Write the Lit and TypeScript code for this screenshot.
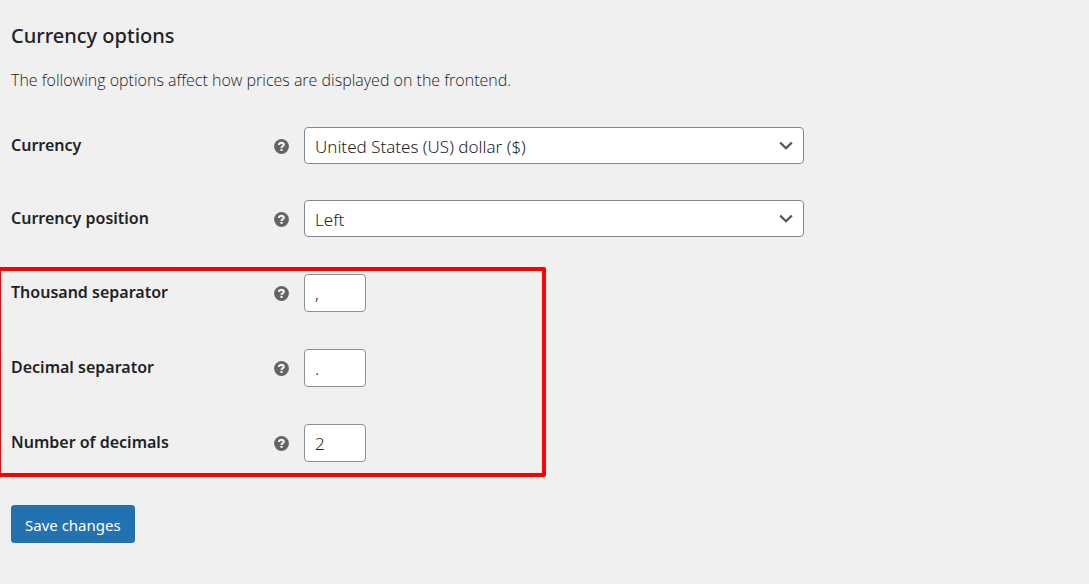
import { LitElement, html, css, svg } from "lit";
import { customElement, property } from "lit/decorators.js";

@customElement("help-tip")
class HelpTip extends LitElement {
  static styles = css`
    :host {
      display: block;
      width: 15px;
      height: 15px;
    }
    .icon {
      display: block;
      width: 15px;
      height: 15px;
    }
  `;

  render() {
    return html`<svg class="icon" viewBox="0 0 15 15" role="img" aria-label="Help">
      ${svg`<circle cx="7.5" cy="7.5" r="7.4" fill="#646464"></circle>
      <path d="M4.9 5.9C4.9 4.4 6 3.9 7.4 3.9S9.8 4.6 9.8 5.7C9.8 7.2 7.5 7.2 7.5 9" fill="none" stroke="#f0f0f0" stroke-width="2.1"></path>
      <rect x="6.4" y="9.9" width="2.2" height="2" fill="#f0f0f0"></rect>`}
    </svg>`;
  }
}

@customElement("setting-row")
class SettingRow extends LitElement {
  @property() label = "";
  @property() name = "";
  @property() value = "";
  @property({ type: Array }) options: string[] = [];
  @property() type = "text";

  static styles = css`
    :host {
      display: block;
    }
    .row {
      display: grid;
      grid-template-columns: 263px 15px minmax(0, 515px);
      align-items: center;
    }
    .label {
      font-size: 16px;
      line-height: 22px;
      font-weight: 600;
      color: #1d2327;
      padding-bottom: 2px;
    }
    .tip {
      padding-top: 1px;
    }
    .field {
      position: relative;
      margin-left: 15px;
    }
    .select,
    .input {
      display: block;
      box-sizing: border-box;
      appearance: none;
      margin: 0;
      border-radius: 4px;
      background: #fff;
      color: #1d2327;
      font: inherit;
      font-size: 17px;
      font-weight: 300;
      line-height: 22px;
    }
    .select {
      width: 100%;
      height: 37px;
      padding: 2px 32px 0 10px;
      border: 1px solid #7e8993;
    }
    .input {
      width: 62px;
      height: 38px;
      padding: 1px 10px 0;
      border: 1px solid #8c8f94;
      appearance: textfield;
    }
    .input::-webkit-inner-spin-button {
      appearance: none;
    }
    .chevron {
      position: absolute;
      right: 10px;
      top: 14px;
      width: 15px;
      height: 10px;
      pointer-events: none;
    }
  `;

  render() {
    return html`<div class="row">
      <label class="label" for=${this.name}>${this.label}</label>
      <help-tip class="tip"></help-tip>
      <div class="field">
        ${this.options.length
          ? html`<select class="select" id=${this.name}>
                ${this.options.map((o) => html`<option>${o}</option>`)}
              </select>
              <svg class="chevron" viewBox="0 0 15 10" aria-hidden="true">
                <path d="M1.2 1.6 7 7.3 12.8 1.6" fill="none" stroke="#50575e" stroke-width="2.2"></path>
              </svg>`
          : html`<input class="input" id=${this.name} type=${this.type} .value=${this.value} />`}
      </div>
    </div>`;
  }
}

@customElement("app-root")
class AppRoot extends LitElement {
  static styles = css`
    :host {
      display: block;
      box-sizing: border-box;
      min-height: 100vh;
      padding: 22px 11px;
      background: #f0f0f0;
      font-family: "Segoe UI", "Noto Sans", "Open Sans", sans-serif;
      color: #1d2327;
    }
    .title {
      margin: 0;
      font-size: 20px;
      line-height: 28px;
      font-weight: 500;
    }
    .intro {
      margin: 19px 0 36px;
      font-family: "Segoe UI", "Open Sans", sans-serif;
      font-size: 16px;
      font-weight: 300;
      line-height: 22px;
    }
    .rows {
      display: grid;
      gap: 37px;
    }
    .selects {
      display: grid;
      gap: 36px;
    }
    .numbers {
      position: relative;
      display: grid;
      gap: 37px;
    }
    .numbers::after {
      content: "";
      position: absolute;
      box-sizing: border-box;
      left: -14px;
      top: -7px;
      bottom: -15px;
      width: 549px;
      border: 4px solid #fe0000;
      border-radius: 2px;
      pointer-events: none;
    }
    .save {
      display: block;
      height: 38px;
      margin: 43px 0 0;
      padding: 2px 13px 0;
      border: 1px solid #2271b1;
      border-radius: 3px;
      background: #2271b1;
      color: #fff;
      font: inherit;
      font-size: 15px;
      line-height: 22px;
    }
  `;

  render() {
    return html`
      <h2 class="title">Currency options</h2>
      <p class="intro">The following options affect how prices are displayed on the frontend.</p>
      <div class="rows">
        <div class="selects">
          <setting-row label="Currency" name="currency" .options=${["United States (US) dollar ($)"]}></setting-row>
          <setting-row label="Currency position" name="position" .options=${["Left", "Right"]}></setting-row>
        </div>
        <div class="numbers">
          <setting-row label="Thousand separator" name="thousand" value=","></setting-row>
          <setting-row label="Decimal separator" name="decimal" value="."></setting-row>
          <setting-row label="Number of decimals" name="decimals" type="number" value="2"></setting-row>
        </div>
      </div>
      <button class="save" type="submit">Save changes</button>
    `;
  }
}
